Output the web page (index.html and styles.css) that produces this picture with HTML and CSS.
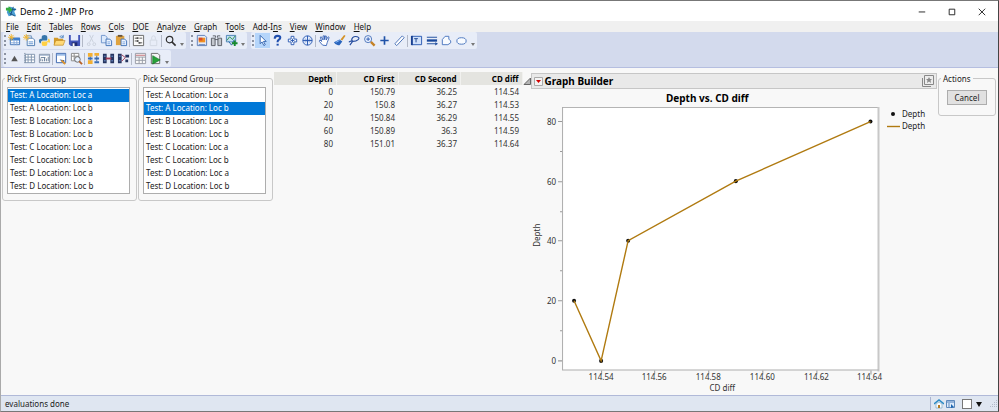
FILE: index.html
```html
<!DOCTYPE html>
<html lang="en">
<head>
  <meta charset="UTF-8">
  <meta name="viewport" content="width=device-width, initial-scale=1.0">
  <title>Demo 2 - JMP Pro</title>
  <link rel="stylesheet" href="styles.css">
</head>
<body>

  <div class="window">
    <header class="title-bar">
      <svg class="icon" viewBox="0 0 14 14"><path d="M3 3l3-1 6 2-2 3 2 5-4-1-4 1-2-4z" fill="#4b9fd5"/><path d="M6 5h6M5 9l6 3M9 2l-3 9" stroke="#174f7d" fill="none"/><path d="M1 3h3V1l4 4-4 4V6H1z" fill="#35ad3e"/></svg>
      <span class="title">Demo 2 - JMP Pro</span>
      <div class="window-buttons">
        <button aria-label="Minimize"><svg class="icon" viewBox="0 0 14 14"><path d="M4 7.5h7" stroke="#222" fill="none"/></svg></button>
        <button aria-label="Maximize"><svg class="icon" viewBox="0 0 14 14"><path d="M4.5 4.5h6v6h-6z" stroke="#222" fill="none"/></svg></button>
        <button aria-label="Close"><svg class="icon" viewBox="0 0 14 14"><path d="M4 4l7 7M11 4l-7 7" stroke="#222" fill="none"/></svg></button>
      </div>
    </header>

    <nav class="menu">
      <a href="#"><u>F</u>ile</a>
      <a href="#"><u>E</u>dit</a>
      <a href="#"><u>T</u>ables</a>
      <a href="#"><u>R</u>ows</a>
      <a href="#"><u>C</u>ols</a>
      <a href="#"><u>D</u>OE</a>
      <a href="#"><u>A</u>nalyze</a>
      <a href="#"><u>G</u>raph</a>
      <a href="#">T<u>o</u>ols</a>
      <a href="#">Add-I<u>n</u>s</a>
      <a href="#"><u>V</u>iew</a>
      <a href="#"><u>W</u>indow</a>
      <a href="#"><u>H</u>elp</a>
    </nav>

    <div class="toolbars">
      <div class="toolbar-row">
        <div class="toolbar">
          <button aria-label="New data table"><svg class="icon" viewBox="0 0 14 14"><path d="M2.500 4.500h10v7h-10z" fill="#fff" stroke="#3d6fb4"/><path d="M2 4h11v3H2z" fill="#3d7fd0"/><path d="M3 9.500h9M6.500 7v5M9.500 7v5" stroke="#7fa5d8"/><path d="M3.500 0v7M0 3.500h7M1 1l5 5M6 1L1 6" stroke="#f2b632"/></svg></button>
          <button aria-label="New script"><svg class="icon" viewBox="0 0 14 14"><path d="M4.500 4.500h6l2 2v6h-8z" fill="#fff" stroke="#4d7ab0"/><path d="M6 8.500h5M6 10.500h5" stroke="#5b8fce"/><path d="M3 2h6v3" fill="none" stroke="#6d93bd"/><path d="M3.500 0v7M0 3.500h7M1 1l5 5M6 1L1 6" stroke="#f2b632"/></svg></button>
          <button aria-label="Python script"><svg class="icon" viewBox="0 0 14 14"><path d="M4 5V3q0-2 3-2t3 2v3q0 1-1 1H5q-2 0-2 3H2Q1 9 1 7t2-2h4z" fill="#3776ab"/><path d="M10 9v2q0 2-3 2t-3-2V9q0-1 1-1h4q2 0 2-3h1q1 1 1 3t-2 1z" fill="#ffd043"/></svg></button>
          <button aria-label="Open"><svg class="icon" viewBox="0 0 14 14"><path d="M1 4h4l1 1h5v7H1z" fill="#d39a28"/><path d="M3 7h10l-2 5H1z" fill="#ffd978" stroke="#b98220" stroke-width=".6"/><path d="M7 3q2-2 4 0M11 1v3H8" stroke="#5489c4" fill="none"/></svg></button>
          <button aria-label="Save"><svg class="icon" viewBox="0 0 14 14"><path d="M1 1h12v12H3l-2-2z" fill="#4154b8"/><path d="M3 1h8v6H3z" fill="#e7edfb"/><path d="M4 9h6v4H4z" fill="#202b70"/><path d="M5 10h2v3H5z" fill="#fff"/></svg></button>
          <span class="separator"></span>
          <button aria-label="Cut" disabled><svg class="icon" viewBox="0 0 14 14"><path d="M5 1l4 8M9 1L5 9" stroke="#c9cfdb" fill="none"/><circle cx="4" cy="11" r="1.500" stroke="#c9cfdb" fill="none"/><circle cx="10" cy="11" r="1.500" stroke="#c9cfdb" fill="none"/></svg></button>
          <button aria-label="Copy"><svg class="icon" viewBox="0 0 14 14"><path d="M1.500 1.500h4l2 2v6h-6z" fill="#dce9fb" stroke="#6e94cb"/><path d="M6.500 5.500h4l2 2v5h-6z" fill="#eef5ff" stroke="#3f70b5"/><path d="M8 8.500h3M8 10.500h3" stroke="#7ba3dc"/></svg></button>
          <button aria-label="Paste"><svg class="icon" viewBox="0 0 14 14"><path d="M1 2h9v10H1z" fill="#dfa340"/><path d="M3 1h5v2H3z" fill="#68543c"/><path d="M6.500 5.500h4l2 2v5h-6z" fill="#eef5ff" stroke="#3f70b5"/><path d="M8 8.500h3M8 10.500h3" stroke="#7ba3dc"/></svg></button>
          <span class="separator"></span>
          <button aria-label="Journal"><svg class="icon" viewBox="0 0 14 14"><path d="M1.500 1.500h11v11h-11z" fill="#fafafa" stroke="#666"/><path d="M3 4.500h3M8 4.500h3M3 7.500h2M8 9.500h3" stroke="#555"/><path d="M5 3.500h2v2H5zM5 6.500h2v2H5zM7 8.500h2v2H7z" fill="#555"/></svg></button>
          <button aria-label="Lock" disabled><svg class="icon" viewBox="0 0 14 14"><path d="M3.500 6.500h7v6h-7zM5 6V4q0-2 2-2t2 2v2" stroke="#d2d7e2" fill="none"/></svg></button>
          <span class="separator"></span>
          <button aria-label="Search"><svg class="icon" viewBox="0 0 14 14"><circle cx="6" cy="6" r="3.500" stroke="#303030" stroke-width="1.300" fill="none"/><path d="M8.500 8.500l4 4" stroke="#303030" stroke-width="1.700"/></svg></button>
          <button class="more" aria-label="More buttons"></button>
        </div>

        <div class="toolbar">
          <button aria-label="Open log"><svg class="icon" viewBox="0 0 14 14"><path d="M2.500 1.500h8l2 2v9h-10z" fill="#e2eafa" stroke="#5d7db5"/><path d="M4 4h7v5H4z" fill="#f09022"/><path d="M4 4h4v3H4z" fill="#d84a28"/><path d="M4 11.500h7" stroke="#5d7db5"/></svg></button>
          <button aria-label="Compare"><svg class="icon" viewBox="0 0 14 14"><path d="M1.500 4.500h4v8h-4zM8.500 4.500h4v8h-4z" fill="#c4c8cf" stroke="#595d65"/><path d="M3 2h3v2M11 2H8v2M5 6h4" fill="none" stroke="#595d65"/></svg></button>
          <button aria-label="Add graph"><svg class="icon" viewBox="0 0 14 14"><path d="M1.500 1.500h10v7h-10z" fill="#c4dff5" stroke="#4c82b7"/><path d="M2 7l3-4 3 3 3-4" fill="none" stroke="#2e9047"/><path d="M4 8l3 4 3-6" fill="none" stroke="#276ba9"/><path d="M10.500 7v6M7.500 10h6" stroke="#178b2e" stroke-width="2"/></svg></button>
          <button class="more" aria-label="More buttons"></button>
        </div>

        <div class="toolbar">
          <button class="active" aria-label="Arrow"><svg class="icon" viewBox="0 0 14 14"><path d="M4.500 1.500v9l2-2 2 4 1.500-1-2-3.500h3z" fill="#fff" stroke="#3263b0"/></svg></button>
          <button aria-label="Help"><svg class="icon" viewBox="0 0 14 14"><path d="M4 5q0-3 3-3t3 2q0 1-1.500 2T7 9" fill="none" stroke="#204fae" stroke-width="2.200"/><path d="M6 10.500h2.300v2H6z" fill="#204fae"/></svg></button>
          <button aria-label="Selection"><svg class="icon" viewBox="0 0 14 14"><path d="M5.500 2.500h3v3h3v3h-3v3h-3v-3h-3v-3h3z" fill="#fff" stroke="#2857b1"/><path d="M5 7h4M7 5v4" stroke="#2857b1"/></svg></button>
          <button aria-label="Scroller"><svg class="icon" viewBox="0 0 14 14"><circle cx="7" cy="7" r="5" fill="#e6eefc" stroke="#2857b1"/><path d="M7 2v10M2 7h10" stroke="#2857b1"/><path d="M4 5h1v1H4zM9 5h1v1H9zM4 8h1v1H4zM9 8h1v1H9zM6 6h2v2H6z" fill="#2857b1"/></svg></button>
          <span class="separator"></span>
          <button aria-label="Grabber"><svg class="icon" viewBox="0 0 14 14"><path d="M5 12L1.500 8 2 6.500 4 8 2.500 3.500l1-.5L5.500 6.500V2H7v4l1-4 1 .3L8.700 6.500 11 3l1 .7-2 5.300-1 3.500z" fill="#fff" stroke="#2857b1" stroke-width=".9"/></svg></button>
          <button aria-label="Brush"><svg class="icon" viewBox="0 0 14 14"><path d="M8 6l4-5 1.500 1L10 7z" fill="#d49328"/><path d="M1 9l6-3 3 2-3 4q-4 1-6-3z" fill="#2864bd"/><path d="M3 9l4-2" stroke="#8fbcf5"/></svg></button>
          <button aria-label="Lasso"><svg class="icon" viewBox="0 0 14 14"><path d="M5 8q-2-2 0-4t5-1q3 1 1 3T5 8l-3 4M5 8q-3-1-4 1" fill="none" stroke="#244c9f" stroke-width="1.200"/></svg></button>
          <button aria-label="Magnifier"><svg class="icon" viewBox="0 0 14 14"><circle cx="5.500" cy="5.500" r="3.800" stroke="#4973b9" fill="#e9f1ff"/><path d="M3.500 5.500h4M5.500 3.500v4" stroke="#2857b1"/><path d="M8.500 8.500l4 4" stroke="#c58125" stroke-width="2.500"/></svg></button>
          <button aria-label="Crosshairs"><svg class="icon" viewBox="0 0 14 14"><path d="M7 2.500v9M2.500 7h9" stroke="#2053a8" stroke-width="1.800"/></svg></button>
          <button aria-label="Ruler"><svg class="icon" viewBox="0 0 14 14"><path d="M2 10.500l8-8.500 2 2-8 8.500z" fill="#fff" stroke="#4770b5"/></svg></button>
          <span class="separator"></span>
          <button aria-label="Text annotation"><svg class="icon" viewBox="0 0 14 14"><path d="M2 2.500h10.500v9H2z" fill="#cfe0fa" stroke="#2857b1"/><path d="M2 2v10" stroke="#183f90" stroke-width="2"/><path d="M4.500 5h4M6.500 5v4" stroke="#1b448f"/></svg></button>
          <button aria-label="Line"><svg class="icon" viewBox="0 0 14 14"><path d="M2 3.500h11M2 10.500h9" stroke="#18489c"/><path d="M2 7h11" stroke="#18489c" stroke-width="2.500"/><path d="M11 9l3 1.500-3 2z" fill="#18489c"/></svg></button>
          <button aria-label="Polygon"><svg class="icon" viewBox="0 0 14 14"><path d="M2.500 11.500V6l3-3.500h4v3l2 2v2l-3 2z" fill="#f8fbff" stroke="#4673bc"/></svg></button>
          <button aria-label="Oval"><svg class="icon" viewBox="0 0 14 14"><ellipse cx="7" cy="7.500" rx="5" ry="3.500" fill="#f8fbff" stroke="#4673bc"/></svg></button>
          <button class="more" aria-label="More buttons"></button>
        </div>
      </div>

      <div class="toolbar-row">
        <div class="toolbar">
          <button aria-label="Collapse"><svg class="icon" viewBox="0 0 14 14"><path d="M7 4l3.500 6h-7z" fill="#555"/></svg></button>
          <button aria-label="Data grid"><svg class="icon" viewBox="0 0 14 14"><path d="M2.500 2.500h10v9h-10zM2.500 5.500h10M2.500 8.500h10M5.500 2.500v9M9 2.500v9" fill="#fff" stroke="#7e93ad"/><path d="M2 1v12" stroke="#51677f" stroke-dasharray="1"/></svg></button>
          <button aria-label="Summary"><svg class="icon" viewBox="0 0 14 14"><path d="M1.500 2.500h11v9h-11z" fill="#fff" stroke="#7e8ea4"/><path d="M2 3.500h10" stroke="#91a9c8"/><path d="M3 10V7M5 10V8M7 10V6M9 10V7M11 10V5M3 6h5" stroke="#627996"/></svg></button>
          <span class="separator"></span>
          <button aria-label="Subset"><svg class="icon" viewBox="0 0 14 14"><path d="M1.500 1.500h10v10h-10z" fill="#fff" stroke="#3461ac"/><path d="M2 2h9v2H2z" fill="#9bbce8"/><path d="M5 8l5 1v4z" fill="#214f9b"/><path d="M7 9l4 4" stroke="#e0962d" stroke-width="2"/></svg></button>
          <button aria-label="Find rows"><svg class="icon" viewBox="0 0 14 14"><path d="M1.500 1.500h8v8h-8zM1.500 4.500h8M4.500 1.500v8" fill="#fff" stroke="#888"/><circle cx="8" cy="8" r="3" fill="#e7f1ff" stroke="#666"/><path d="M10 10l3 3" stroke="#b76228" stroke-width="2"/></svg></button>
          <span class="separator"></span>
          <button aria-label="Sort"><svg class="icon" viewBox="0 0 14 14"><path d="M1 1h5v4H1zM8 1h5v3H8zM1 9h5v4H1z" fill="#f3af32"/><path d="M1 6h5v2H1zM8 6h5v2H8zM8 10h5v2H8z" fill="#3a6eb8"/><path d="M3.500 5v4M10.500 4v6" stroke="#42689b"/></svg></button>
          <button aria-label="Join"><svg class="icon" viewBox="0 0 14 14"><path d="M1 2h4v10H1zM9 2h4v10H9z" fill="#25345f"/><path d="M2 4.500h2M2 9.500h2M10 4.500h2M10 9.500h2" stroke="#789bd8"/><path d="M4 7h6" stroke="#a13b54" stroke-width="2"/></svg></button>
          <button aria-label="Split"><svg class="icon" viewBox="0 0 14 14"><path d="M1 2h4v10H1zM9 3h4v3H9zM9 8h3v3H9z" fill="#25345f"/><path d="M2 4.500h2M2 9.500h2" stroke="#789bd8"/><path d="M5 3l4 3-4 4" fill="none" stroke="#a13b54"/></svg></button>
          <span class="separator"></span>
          <button aria-label="Tabulate"><svg class="icon" viewBox="0 0 14 14"><path d="M1.500 1.500h11v11h-11zM1.500 5.500h11M5.500 5.500v7M9 5.500v7M2 9h10" fill="#f8f8f8" stroke="#969ba5"/><path d="M2 3.500h10" stroke="#bf6971"/></svg></button>
          <button aria-label="Run script"><svg class="icon" viewBox="0 0 14 14"><path d="M2.500 1.500h7l2 2v9h-9z" fill="#f5f5f5" stroke="#666"/><path d="M4 4l8 4.500L4 13z" fill="#27a339" stroke="#13772a" stroke-width=".7"/></svg></button>
          <button class="more" aria-label="More buttons"></button>
        </div>
      </div>
    </div>

    <main class="content">
      <fieldset class="group">
        <legend><label for="first-group">Pick First Group</label></legend>
        <select id="first-group" size="8">
          <option selected>Test: A Location: Loc a</option>
          <option>Test: A Location: Loc b</option>
          <option>Test: B Location: Loc a</option>
          <option>Test: B Location: Loc b</option>
          <option>Test: C Location: Loc a</option>
          <option>Test: C Location: Loc b</option>
          <option>Test: D Location: Loc a</option>
          <option>Test: D Location: Loc b</option>
        </select>
      </fieldset>

      <fieldset class="group">
        <legend><label for="second-group">Pick Second Group</label></legend>
        <select id="second-group" size="8">
          <option>Test: A Location: Loc a</option>
          <option selected>Test: A Location: Loc b</option>
          <option>Test: B Location: Loc a</option>
          <option>Test: B Location: Loc b</option>
          <option>Test: C Location: Loc a</option>
          <option>Test: C Location: Loc b</option>
          <option>Test: D Location: Loc a</option>
          <option>Test: D Location: Loc b</option>
        </select>
      </fieldset>

      <table class="results">
        <thead>
          <tr><th>Depth</th><th>CD First</th><th>CD Second</th><th>CD diff</th></tr>
        </thead>
        <tbody>
          <tr><td>0</td><td>150.79</td><td>36.25</td><td>114.54</td></tr>
          <tr><td>20</td><td>150.8</td><td>36.27</td><td>114.53</td></tr>
          <tr><td>40</td><td>150.84</td><td>36.29</td><td>114.55</td></tr>
          <tr><td>60</td><td>150.89</td><td>36.3</td><td>114.59</td></tr>
          <tr><td>80</td><td>151.01</td><td>36.37</td><td>114.64</td></tr>
        </tbody>
      </table>

      <section class="graph">
        <div class="graph-header">
          <button class="disclosure" aria-label="Collapse Graph Builder"><svg viewBox="0 0 8 8"><path d="M7.500 1v6.500H1z" fill="#b5b5b5" stroke="#666"/></svg></button>
          <div class="graph-bar">
            <button class="red-menu" aria-label="Graph Builder options"><svg viewBox="0 0 9 9"><path d="M.5.5h8v8h-8z" fill="#f4f4f4" stroke="#aaa"/><path d="M2 3h5L4.500 6z" fill="#d00000"/></svg></button>
            <h1>Graph Builder</h1>
            <button class="favorite" aria-label="Add to favorites"><svg viewBox="0 0 12 12"><path d="M.5 3v8.500H9" fill="none" stroke="#888"/><path d="M2.500.5h9v9h-9z" fill="#ececec" stroke="#888"/><path d="M7 2l1 2h2L8.500 5.500 9 8 7 6.500 5 8l.5-2.500L4 4h2z" fill="#888"/></svg></button>
          </div>
        </div>
        <div class="graph-body">
          <svg class="plot" viewBox="0 0 358 305" role="img" aria-label="Depth vs. CD diff">
            <text class="plot-title" x="181" y="13">Depth vs. CD diff</text>
            <rect x="36.500" y="18.500" width="315" height="262" fill="#fff"/>
            <path d="M36 18.500h316" stroke="#b4b4b4"/>
            <path d="M352 18v264" stroke="#c8c8c8" stroke-width="2"/>
            <path d="M36.500 18v262.500H352" fill="none" stroke="#adadad"/>
            <path d="M32 32.500h4M32 92.500h4M32 151.500h4M32 211.500h4M32 271.500h4M34 62.500h2M34 122.500h2M34 181.500h2M34 241.500h2" stroke="#999"/>
            <path d="M75.500 281v4M128.500 281v4M182.500 281v4M236.500 281v4M290.500 281v4M344.500 281v4" stroke="#999"/>
            <g class="y-labels">
              <text x="30" y="36">80</text>
              <text x="30" y="96">60</text>
              <text x="30" y="155">40</text>
              <text x="30" y="215">20</text>
              <text x="30" y="275">0</text>
            </g>
            <g class="x-labels">
              <text x="75" y="291">114.54</text>
              <text x="128" y="291">114.56</text>
              <text x="182" y="291">114.58</text>
              <text x="236" y="291">114.60</text>
              <text x="290" y="291">114.62</text>
              <text x="343" y="291">114.64</text>
              <text x="196" y="302">CD diff</text>
            </g>
            <text class="axis-title" x="14" y="146" transform="rotate(-90 14 146)">Depth</text>
            <g fill="#111">
              <circle cx="48" cy="211.500" r="2"/>
              <circle cx="75" cy="271.500" r="2"/>
              <circle cx="102" cy="151.500" r="2"/>
              <circle cx="209.500" cy="92" r="2"/>
              <circle cx="344" cy="32.500" r="2"/>
            </g>
            <path d="M48 211.500l27 60 27-120L209.500 92 344 32.500" fill="none" stroke="#b07a10" stroke-width="1.400"/>
          </svg>
          <ul class="plot-legend">
            <li><svg viewBox="0 0 14 12"><circle cx="7" cy="6" r="2" fill="#111"/></svg>Depth</li>
            <li><svg viewBox="0 0 14 12"><path d="M1 6.500h13" stroke="#b07a10" stroke-width="1.400"/></svg>Depth</li>
          </ul>
        </div>
      </section>

      <fieldset class="group actions">
        <legend>Actions</legend>
        <button class="cancel">Cancel</button>
      </fieldset>
    </main>

    <footer class="status-bar">
      <span>evaluations done</span>
      <div class="status-tools">
        <button aria-label="Home window"><svg viewBox="0 0 10 10"><path d="M0 5l5-4 5 4" fill="none" stroke="#2b8ac5" stroke-width="1.500"/><path d="M2 5l3-2 3 2v4H2z" fill="#f7fbff" stroke="#6b9bb9" stroke-width=".6"/><path d="M4 6h2v3H4z" fill="#b47920"/></svg></button>
        <button aria-label="Window list"><svg viewBox="0 0 10 10"><path d="M1.500 1.500h8v7h-8z" fill="#dceafa" stroke="#5d88bb"/><path d="M2 3h7" stroke="#4b7bb8"/><path d="M3 5h2M3 7h2" stroke="#5d88bb"/><path d="M6 5l3 3-3 1z" fill="#1d66b1"/></svg></button>
        <input type="checkbox" aria-label="Select window">
        <button aria-label="Window menu"><svg viewBox="0 0 10 10"><path d="M2 3h6L5 8z" fill="#111"/></svg></button>
        <svg class="grip" viewBox="0 0 10 10"><path d="M8 1h1v1H8zM6 3h1v1H6zM8 3h1v1H8zM4 5h1v1H4zM6 5h1v1H6zM8 5h1v1H8zM2 7h1v1H2zM4 7h1v1H4zM6 7h1v1H6zM8 7h1v1H8z" fill="#b3bac9"/></svg>
      </div>
    </footer>
  </div>

</body>
</html>
```

FILE: styles.css
```css
* {
  box-sizing: border-box;
}

body {
  margin: 0;
  font-family: "Noto Sans", "Open Sans", sans-serif;
  font-size: 8px;
  line-height: 13px;
  color: #222;
}

button {
  display: flex;
  align-items: center;
  justify-content: center;
  padding: 0;
  border: 0;
  background: none;
  font: inherit;
  color: inherit;
}

svg {
  display: block;
}

.icon {
  width: 13px;
  height: 13px;
}

.window {
  display: flex;
  flex-direction: column;
  min-height: 100vh;
  border: 1px solid #777;
  border-left-color: #aaa;
  border-right-color: #444;
  background-color: #f8f8f8;
}

.title-bar {
  display: flex;
  align-items: center;
  height: 20px;
  padding: 0 2px 0 4px;
  background-color: #fff;
}

.title {
  margin-left: 2px;
  font-size: 9px;
  color: #000;
}

.window-buttons {
  display: flex;
  margin-left: auto;
}

.window-buttons button {
  width: 30px;
  height: 20px;
}

.menu {
  display: flex;
  gap: 8px;
  height: 11px;
  padding-left: 5px;
  line-height: 11px;
  background-color: #f0f0f0;
}

.menu a {
  color: #111;
  text-decoration: none;
}

.toolbars {
  display: flex;
  flex-direction: column;
  gap: 1px;
  padding: 0 2px;
  border-bottom: 1px solid #b5bee0;
  background-color: #d3daed;
}

.toolbar-row {
  display: flex;
  gap: 4px;
}

.toolbar {
  display: flex;
  align-items: center;
  height: 17px;
  border-radius: 2px;
  background-color: #e8edf8;
}

.toolbar::before {
  content: "";
  height: 11px;
  margin: 0 1px;
  border-left: 2px dotted #8c93a3;
}

.toolbar button {
  width: 15px;
  height: 15px;
}

.toolbar .active {
  background-color: #b5d5fa;
}

.separator {
  width: 1px;
  height: 12px;
  margin-right: 1px;
  background-color: #b3b9c7;
}

.toolbar .more {
  align-self: flex-end;
  width: 8px;
  height: 8px;
}

.more::before {
  content: "";
  border: 2px solid transparent;
  border-top: 3px solid #777;
}

.content {
  display: flex;
  flex: 1;
  align-items: flex-start;
  padding: 4px 2px 0 1px;
}

.group {
  flex: none;
  width: 135px;
  margin: 0 1px 0 0;
  padding: 2px 6px 6px 4px;
  border: 1px solid #c8c8c8;
  border-radius: 3px;
}

.group legend {
  padding: 0 2px;
  margin-left: -2px;
}

.group select {
  display: block;
  width: 100%;
  height: 107px;
  padding: 1px 0 0;
  border: 1px solid #adadad;
  border-radius: 0;
  outline: 0;
  overflow: hidden;
  background-color: #fff;
  font: inherit;
}

.group option {
  height: 13px;
  min-height: 13px;
  padding: 0 2px;
  line-height: 13px;
  color: #222;
}

.group option:checked {
  background: linear-gradient(#0078d7, #0078d7);
  -webkit-text-fill-color: #fff;
}

.results {
  flex: none;
  border-collapse: collapse;
  color: #333;
}

.results th,
.results td {
  width: 62px;
  height: 13px;
  padding: 0 3px 0 0;
  text-align: right;
}

.results th {
  border-right: 1px solid #f1f1ef;
  background-color: #e4e4e0;
  color: #000;
}

.graph {
  flex: 1;
  min-width: 0;
  padding-top: 1px;
}

.graph-header {
  display: flex;
  align-items: center;
}

.disclosure,
.disclosure svg {
  width: 8px;
  height: 8px;
}

.graph-bar {
  display: flex;
  flex: 1;
  align-items: center;
  height: 16px;
  padding: 0 2px;
  border: 1px solid #c6c6c6;
  background-color: #e9e9e9;
}

.red-menu svg {
  width: 9px;
  height: 9px;
}

.graph-bar h1 {
  margin: 0 0 0 2px;
  font-size: 10px;
  color: #000;
}

.favorite {
  margin-left: auto;
}

.favorite svg {
  width: 12px;
  height: 12px;
}

.graph-body {
  display: flex;
  align-items: flex-start;
  padding-left: 3px;
}

.plot {
  flex: 1;
  min-width: 0;
  overflow: visible;
  fill: #333;
}

.plot-title {
  font-size: 10px;
  font-weight: bold;
  text-anchor: middle;
  fill: #000;
}

.y-labels {
  text-anchor: end;
}

.x-labels,
.axis-title {
  text-anchor: middle;
}

.plot-legend {
  flex: none;
  width: 53px;
  margin: 0;
  padding: 19px 0 0;
  list-style: none;
}

.plot-legend li {
  display: flex;
  gap: 2px;
  height: 12px;
  padding-left: 2px;
  line-height: 12px;
}

.plot-legend svg {
  width: 14px;
  height: 12px;
}

.actions {
  width: 58px;
  margin: 0 0 0 1px;
  padding: 2px 4px 10px;
}

.cancel {
  width: 40px;
  height: 15px;
  margin: 3px auto 0;
  border: 1px solid #adadad;
  background-color: #e1e1e1;
}

.status-bar {
  display: flex;
  align-items: center;
  justify-content: space-between;
  height: 16px;
  padding-left: 4px;
  border-top: 1px solid #b0b9d8;
  background-color: #dfe6f1;
}

.status-tools {
  display: flex;
  align-items: center;
  gap: 1px;
  height: 13px;
  padding-left: 3px;
  border-left: 1px solid #aab4cf;
}

.status-tools svg {
  width: 10px;
  height: 10px;
}

.status-tools input {
  appearance: none;
  width: 10px;
  height: 10px;
  margin: 0 1px 0 6px;
  border: 1px solid #777;
  background-color: #fff;
}

.status-tools .grip {
  margin-left: 3px;
}
```
